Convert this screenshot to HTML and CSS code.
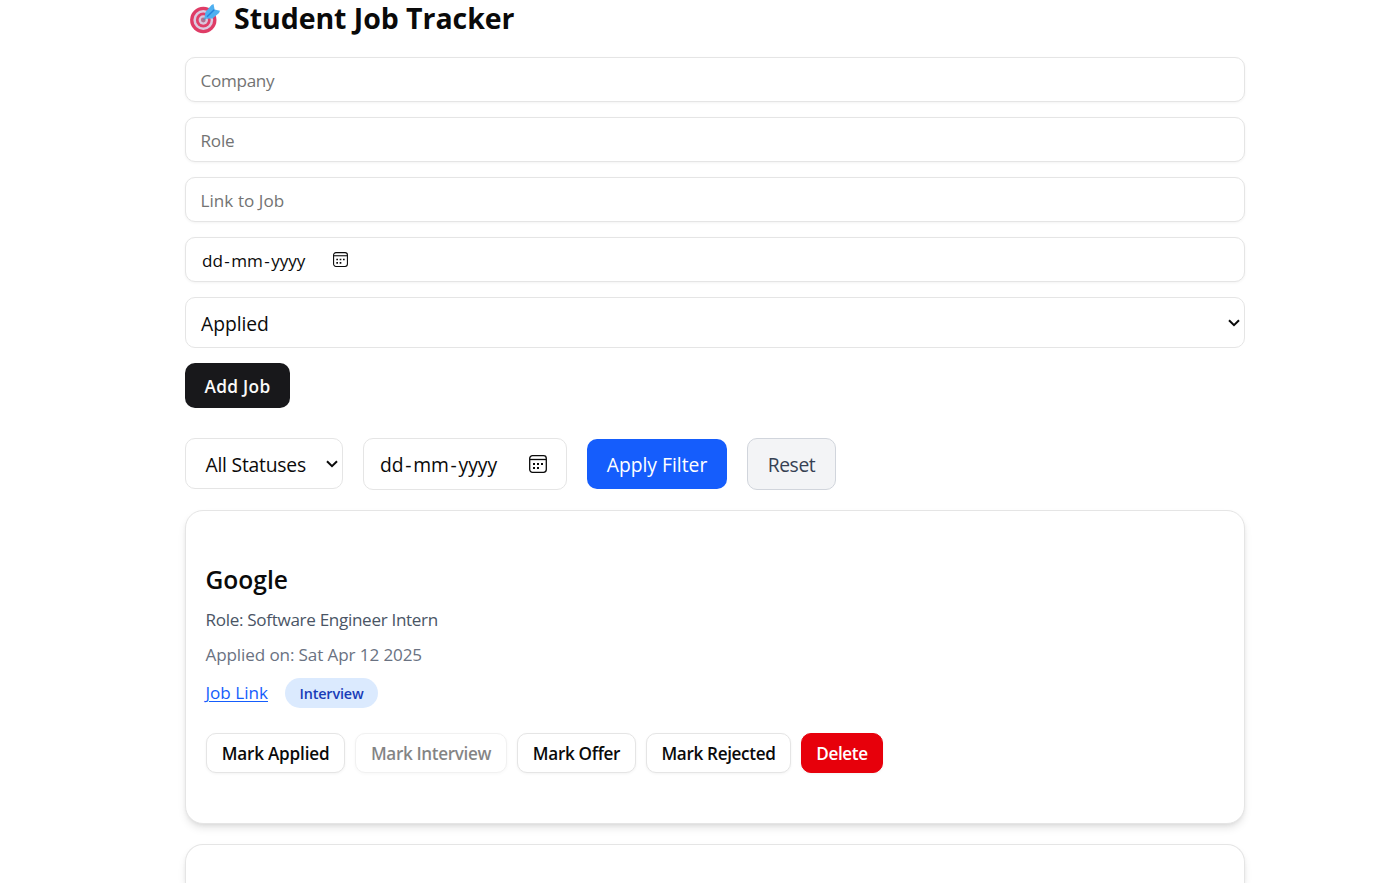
FILE: index.html
```html
<!DOCTYPE html>
<html lang="en">
<head>
<meta charset="utf-8">
<title>Student Job Tracker</title>
<link rel="stylesheet" href="styles.css">
</head>
<body>
<svg class="defs" width="0" height="0" aria-hidden="true">
  <symbol id="calendar" viewBox="0 0 18 18">
    <rect x="0.7" y="0.7" width="16.6" height="16.6" rx="2.8" fill="none" stroke="currentColor" stroke-width="1.3"/>
    <path d="M1 4.5H17" stroke="currentColor" stroke-width="1.3"/>
    <path d="M4 8h2v2H4zM8 8h2v2H8zM12 8h2v2h-2zM4 12h2v2H4zM8 12h2v2H8z" fill="currentColor"/>
  </symbol>
  <symbol id="chevron" viewBox="0 0 12 8">
    <path d="M1 1.2L6 6.2L11 1.2" fill="none" stroke="currentColor" stroke-width="2"/>
  </symbol>
</svg>
<main class="page">
  <h1 class="title">
    <svg class="target" viewBox="0 0 30 30" aria-hidden="true">
      <circle cx="13.3" cy="16" r="13.2" fill="#df3c66"/>
      <circle cx="13.3" cy="16" r="9.9" fill="#dccbe0"/>
      <circle cx="13.3" cy="16" r="7.4" fill="#e04069"/>
      <circle cx="13.3" cy="16" r="4.7" fill="#d9c7dc"/>
      <circle cx="13.3" cy="16" r="2.4" fill="#b7708f"/>
      <path d="M13.5 16L20 9.5" stroke="#5f8eaa" stroke-width="1.6"/>
      <path d="M14.3 14.8L15.5 8L21.5 1L23.5 0L24.6 5.4L30 6.8L29 9L22.5 14.6Z" fill="#4fb0f0"/>
      <path d="M17 12.8L24.2 5.8" stroke="#2583dc" stroke-width="1.5"/>
    </svg>
    <span class="title-text">Student Job Tracker</span>
  </h1>
  <form class="job-form">
    <input class="field field-company" type="text" placeholder="Company">
    <input class="field field-role" type="text" placeholder="Role">
    <input class="field field-link" type="text" placeholder="Link to Job">
    <div class="field date"><span class="date-text">dd<span class="dash">-</span>mm<span class="dash">-</span>yyyy</span><svg class="date-icon"><use href="#calendar"/></svg></div>
    <div class="select"><span class="select-text">Applied</span><svg class="chevron"><use href="#chevron"/></svg></div>
    <button class="add" type="button">Add Job</button>
  </form>
  <section class="filters">
    <div class="select filter-status"><span class="status-text">All Statuses</span><svg class="chevron"><use href="#chevron"/></svg></div>
    <div class="filter-date"><span class="filter-date-text">dd<span class="dash">-</span>mm<span class="dash">-</span>yyyy</span><svg class="filter-date-icon"><use href="#calendar"/></svg></div>
    <button class="apply" type="button">Apply Filter</button>
    <button class="reset" type="button">Reset</button>
  </section>
  <section class="jobs">
    <article class="card">
      <h2 class="company">Google</h2>
      <p class="role">Role: Software Engineer Intern</p>
      <p class="applied-on">Applied on: Sat Apr 12 2025</p>
      <div class="meta"><a class="link" href="#">Job Link</a><span class="badge">Interview</span></div>
      <div class="actions">
        <button class="action mark-applied" type="button">Mark Applied</button>
        <button class="action mark-interview" type="button" disabled>Mark Interview</button>
        <button class="action mark-offer" type="button">Mark Offer</button>
        <button class="action mark-rejected" type="button">Mark Rejected</button>
        <button class="action delete" type="button">Delete</button>
      </div>
    </article>
    <article class="card card-next"></article>
  </section>
</main>
</body>
</html>
```
FILE: styles.css
```css
* { box-sizing: border-box; }
html, body { height: 100%; }
body {
  margin: 0;
  overflow: hidden;
  background: #fff;
  color: #0a0a0a;
  font-family: "Open Sans", "Noto Sans", sans-serif;
}
button, input { font-family: inherit; margin: 0; }
.defs { display: block; }
.page { width: 1060px; margin-left: 185px; }
h1, h2, p { margin: 0; }
.title { display: flex; align-items: center; height: 37px; padding-left: 5px; font-size: 28.5px; line-height: 37px; font-weight: 700; }
.target { width: 30px; height: 30px; margin-right: 14px; }
.title-text { letter-spacing: -0.05px; white-space: nowrap; }

.job-form { display: flex; flex-direction: column; align-items: flex-start; gap: 15px; margin-top: 20px; }
.field {
  display: flex;
  align-items: center;
  width: 100%;
  height: 45px;
  padding: 1px 15px 0 14.5px;
  border: 1px solid #e5e5e5;
  border-radius: 10px;
  background: #fff;
  box-shadow: 0 1px 3px rgba(0, 0, 0, 0.05);
  font-size: 17.1px;
}
.field::placeholder { color: #737373; opacity: 1; }
.field-company { letter-spacing: -0.3px; }
.field-role { letter-spacing: -0.2px; }
.field-link { letter-spacing: 0.05px; }
.date { padding-left: 16px; }
.date-text { width: 104px; white-space: nowrap; }
.date-text .dash { margin: 0 1.4px; }
.date-icon { width: 15px; height: 15px; margin: -2px 0 0 27px; }
.select {
  display: flex;
  align-items: center;
  justify-content: space-between;
  width: 100%;
  height: 51px;
  padding: 2px 4px 0 15px;
  border: 1px solid #e5e5e5;
  border-radius: 10px;
  font-size: 19.3px;
}
.select-text { letter-spacing: -0.05px; }
.status-text { letter-spacing: -0.22px; }
.chevron { width: 12px; height: 8px; margin-top: -2px; }
.add { width: 105px; height: 45px; padding: 1px 0 0; border: 0; border-radius: 10px; background: #18181b; color: #fafafa; font-size: 17.3px; font-weight: 600; letter-spacing: 0.3px; }

.filters { display: flex; align-items: center; gap: 20px; height: 52px; margin-top: 30px; }
.filter-status { width: 158px; padding-left: 19.5px; margin-top: -1px; }
.filter-date { display: flex; align-items: center; justify-content: space-between; width: 204px; height: 52px; padding: 0 19px 0 16px; border: 1px solid #e5e5e5; border-radius: 10px; font-size: 19.3px; }
.filter-date-text { white-space: nowrap; }
.filter-date-text .dash { margin: 0 1.7px; }
.filter-date-icon { width: 18px; height: 18px; margin-top: -1px; }
.apply { width: 140px; height: 50px; padding: 0; border: 0; border-radius: 10px; background: #155dfc; color: #fff; font-size: 19.3px; }
.reset { width: 89px; height: 52px; padding: 0; border: 1px solid #d1d5dc; border-radius: 10px; background: #f3f4f6; color: #364153; font-size: 19.3px; letter-spacing: -0.4px; }

.jobs { display: grid; gap: 20px; margin-top: 20px; }
.card { height: 314px; padding: 49px 20px 0 19.5px; border: 1px solid #e5e5e5; border-radius: 18px; background: #fff; box-shadow: 0 5px 8px -1px rgba(0, 0, 0, 0.1), 0 2px 5px -2px rgba(0, 0, 0, 0.1); }
.card-next { height: 39px; padding: 0; border-bottom: 0; border-radius: 18px 18px 0 0; }
.company { height: 40px; font-size: 24.6px; line-height: 40px; font-weight: 600; }
.role { height: 35px; margin-top: 2px; color: #4a5565; font-size: 17.1px; line-height: 36px; letter-spacing: -0.32px; }
.applied-on { height: 35px; color: #6a7282; font-size: 17.1px; line-height: 36px; letter-spacing: -0.12px; }
.meta { display: flex; align-items: center; gap: 16px; height: 30px; margin-top: 6px; }
.link { width: 63.5px; color: #155dfc; font-size: 17.1px; line-height: 30px; white-space: nowrap; text-decoration: underline; text-decoration-thickness: 1px; text-underline-offset: 2px; }
.badge { width: 93px; height: 30px; border-radius: 15px; background: #dbeafe; color: #193cb8; font-size: 14.4px; line-height: 32px; font-weight: 600; letter-spacing: -0.15px; text-align: center; }
.actions { display: flex; gap: 10px; margin: 25px 0 0 0.5px; }
.action { height: 40px; padding: 0; border: 1px solid #e5e5e5; border-radius: 10px; background: #fff; color: #0a0a0a; box-shadow: 0 1px 3px rgba(0, 0, 0, 0.05); font-size: 17.1px; font-weight: 600; white-space: nowrap; }
.mark-applied { width: 139px; letter-spacing: -0.18px; }
.mark-interview { width: 152px; opacity: 0.5; letter-spacing: -0.35px; }
.mark-offer { width: 119px; letter-spacing: -0.3px; }
.mark-rejected { width: 145px; letter-spacing: -0.33px; }
.delete { width: 82px; border-color: #e7000b; background: #e7000b; color: #fff; letter-spacing: -0.35px; }
```
